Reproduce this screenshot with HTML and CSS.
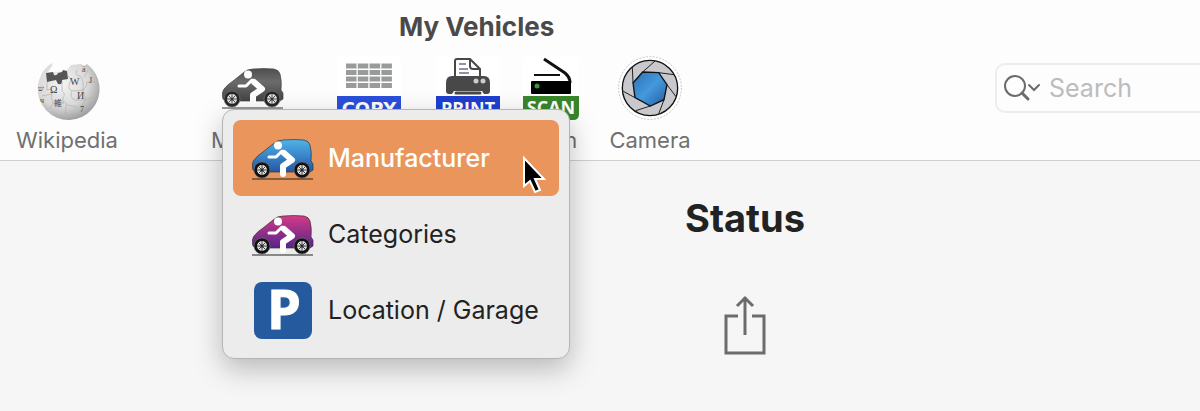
FILE: index.html
```
<!DOCTYPE html>
<html lang="en">
<head>
  <meta charset="UTF-8">
  <title>My Vehicles</title>
  <link rel="stylesheet" href="styles.css">
</head>
<body>

<!-- shared gradients and the car, the body takes its fill from <use> -->
<svg class="defs" width="0" height="0" aria-hidden="true">
  <defs>
    <linearGradient id="gray" x1="0" y1="0" x2="0" y2="1">
      <stop offset="0" stop-color="#3c3c3c"/>
      <stop offset="0.4" stop-color="#5c5c5c"/>
      <stop offset="1" stop-color="#303030"/>
    </linearGradient>
    <linearGradient id="blue" x1="0" y1="0" x2="0" y2="1">
      <stop offset="0" stop-color="#4fb4ea"/>
      <stop offset="1" stop-color="#2456a6"/>
    </linearGradient>
    <linearGradient id="purple" x1="0" y1="0" x2="0" y2="1">
      <stop offset="0" stop-color="#d63a86"/>
      <stop offset="1" stop-color="#55248c"/>
    </linearGradient>
    <linearGradient id="lens" x1="0" y1="0" x2="1" y2="1">
      <stop offset="0" stop-color="#2f6fb6"/>
      <stop offset="0.5" stop-color="#4499dc"/>
      <stop offset="1" stop-color="#2459a0"/>
    </linearGradient>
    <radialGradient id="globe" cx="0.4" cy="0.35" r="0.7">
      <stop offset="0" stop-color="#f4f4f4"/>
      <stop offset="0.6" stop-color="#d8d8d8"/>
      <stop offset="1" stop-color="#969696"/>
    </radialGradient>
    <g id="wheel">
      <circle r="8" fill="#111" stroke="#777" stroke-width="0.6"/>
      <circle r="5" fill="#ddd"/>
      <path d="M0-5V5M-5 0H5M-3.5-3.5L3.5 3.5M-3.5 3.5L3.5-3.5" stroke="#444" stroke-width="1"/>
      <circle r="1.5" fill="#222"/>
    </g>
    <symbol id="car" viewBox="0 0 62 42">
      <path d="M1 31C0 28 0 24 2 21Q6 16 11 13L21 5Q25 1 31 1Q42 0 52 1Q57 2 58 6Q60 13 59 22L61 25V31L58 33H3Z" stroke="#333" stroke-width="0.7"/>
      <use href="#wheel" x="10" y="31"/>
      <use href="#wheel" x="50" y="31"/>
      <path d="M0 40H61" stroke="#222" stroke-width="1"/>
      <g class="rider">
        <circle cx="26" cy="6.5" r="4"/>
        <path class="arm" d="M17 18H24L30 12"/>
        <path class="body" d="M32 14L40 21L31 27V35"/>
      </g>
    </symbol>
  </defs>
</svg>

<header>
  <h1>My Vehicles</h1>
  <div class="toolbar">
    <button class="tool wiki">
      <svg width="64" height="64" viewBox="0 0 64 64">
        <path d="M14 9L18 7L16 12L12 17L31 15L36 9L46 8L49 10L52 8A31 31 0 1 1 14 9Z" fill="url(#globe)"/>
        <path d="M11 17L18 16L19 19Q22 20 23 17L27 16L28 14L32 15L33 23L27 24Q28 29 23 28L21 24L12 26Z" fill="#565656"/>
        <g fill="none" stroke="#b0b0b0" stroke-width="0.7">
          <path d="M12 26V34Q17 32 17 37Q15 41 18 47L26 48Q30 44 32 49L42 51"/>
          <path d="M27 25V35Q31 38 28 42V48M33 20Q37 22 35 27Q31 34 39 35L48 34Q53 30 52 26L60 26"/>
          <path d="M42 14Q39 20 45 20Q49 24 48 34L51 44Q46 47 46 57M7 40L17 38M31 49L30 61"/>
          <path d="M37 35Q34 42 40 44L51 44L57 41M18 47L15 53M53 14L49 21"/>
        </g>
        <g class="glyphs">
          <text x="15" y="37">Ω</text>
          <text x="35" y="29">W</text>
          <text x="42" y="43">И</text>
          <text x="45" y="56" class="small">7</text>
          <text x="19" y="50" class="small">維</text>
          <text x="3" y="35" class="small">ש</text>
          <text x="47" y="16" class="small">ä</text>
          <text x="54" y="27" class="small">J</text>
          <text x="5" y="47" class="small">ч</text>
        </g>
      </svg>
      <span>Wikipedia</span>
    </button>

    <div class="dropdown">
      <button class="tool" aria-haspopup="menu" aria-expanded="true">
        <svg class="dim" width="62" height="64" viewBox="0 -12 62 64"><use href="#car" width="62" height="42" fill="url(#gray)"/></svg>
        <span>Manage</span>
      </button>
      <div class="menu" role="menu">
        <button class="menu-item active" role="menuitem">
          <svg width="62" height="46" viewBox="0 -4 62 46"><use href="#car" width="62" height="42" fill="url(#blue)"/></svg>
          Manufacturer
          <svg class="cursor" width="24" height="38" viewBox="0 0 24 38">
            <path d="M2 2V30L8 25L13 36L18 34L13 23H22Z" fill="#000" stroke="#fff" stroke-width="2"/>
          </svg>
        </button>
        <button class="menu-item" role="menuitem">
          <svg width="62" height="46" viewBox="0 -4 62 46"><use href="#car" width="62" height="42" fill="url(#purple)"/></svg>
          Categories
        </button>
        <button class="menu-item" role="menuitem">
          <svg width="62" height="58" viewBox="0 0 62 58">
            <rect x="2" y="1" width="58" height="57" rx="8" fill="#255a9f"/>
            <text class="parking" x="32" y="48">P</text>
          </svg>
          Location / Garage
        </button>
      </div>
    </div>

    <button class="tool copy" aria-label="Copy">
      <svg width="64" height="64" viewBox="0 0 64 64">
        <rect width="64" height="64" rx="5" fill="#fff"/>
        <path d="M9 10H55M9 16.500H55M9 23H55M9 29.500H55" stroke="#999b9b" stroke-width="5" stroke-dasharray="10.500 1.300"/>
        <path d="M0 40H64V60Q64 64 60 64H4Q0 64 0 60Z" fill="#2b4fdb"/>
        <text class="badge wide" x="32" y="59">COPY</text>
      </svg>
    </button>

    <button class="tool print" aria-label="Print">
      <svg width="64" height="64" viewBox="0 0 64 64">
        <rect width="64" height="64" rx="5" fill="#fff"/>
        <path d="M10 35V27Q10 20 16 20H48Q54 20 54 27V35Q54 38 51 38H48L46 35H18L16 38H13Q10 38 10 35Z" fill="#484848"/>
        <path d="M19 21V5Q19 3 21 3H34L44 13V21Z" fill="#fff" stroke="#484848" stroke-width="2"/>
        <path d="M34 3V10Q34 13 37 13H44" fill="none" stroke="#484848" stroke-width="2"/>
        <path d="M23 8H30M23 13H32M23 17H33" stroke="#9690a4" stroke-width="2"/>
        <rect x="18" y="20" width="28" height="3" fill="#484848"/>
        <circle cx="40" cy="25" r="2.500" fill="#ccc"/>
        <circle cx="47" cy="25" r="2.500" fill="#ccc"/>
        <path d="M20 37H44" stroke="#484848" stroke-width="3" stroke-linecap="round"/>
        <path d="M0 40H64V60Q64 64 60 64H4Q0 64 0 60Z" fill="#1f3fcf"/>
        <text class="badge" x="32" y="59">PRINT</text>
      </svg>
    </button>

    <button class="tool scan">
      <svg width="56" height="64" viewBox="0 0 56 64">
        <rect width="56" height="64" rx="5" fill="#fff"/>
        <path d="M21 3L42 17Q47 21 47 27" fill="none" stroke="#111" stroke-width="3"/>
        <path d="M11 19H37" stroke="#111" stroke-width="2"/>
        <rect x="8" y="25" width="40" height="13" rx="1" fill="#000"/>
        <circle cx="14" cy="30" r="2.500" fill="#3f9442"/>
        <path d="M0 40H56V58Q56 64 50 64H6Q0 64 0 58Z" fill="#3a852b"/>
        <text class="badge" x="28" y="58">SCAN</text>
      </svg>
      <span>Scan</span>
    </button>

    <button class="tool camera">
      <svg width="64" height="64" viewBox="54 32 192 192">
        <circle cx="150" cy="128" r="94" fill="#fff" stroke="#aaa" stroke-width="2" stroke-dasharray="6 4"/>
        <circle cx="150" cy="128" r="83" fill="#c9c9cd" stroke="#111" stroke-width="4"/>
        <path d="M128 80L165 47M176 82L222 88M201 118L228 154M192 163L176 206M151 182L107 196M105 157L70 138M99 113L97 66" stroke="#222" stroke-width="3"/>
        <path d="M128 80L176 82L201 118L192 163L151 182L105 157L99 113Z" fill="url(#lens)" stroke="#111" stroke-width="4"/>
      </svg>
      <span>Camera</span>
    </button>

    <label class="search">
      <svg width="36" height="28" viewBox="0 0 36 28" fill="none" stroke="#6b6b6b" stroke-width="2" stroke-linecap="round">
        <circle cx="11" cy="12" r="10"/>
        <path d="M18 19L24 25" stroke-width="3"/>
        <path d="M25 11L30 16L35 11"/>
      </svg>
      <input type="search" placeholder="Search" aria-label="Search">
    </label>
  </div>
</header>

<main>
  <h2>Status</h2>
  <button class="share" aria-label="Share">
    <svg width="42" height="60" viewBox="0 0 42 60" fill="none" stroke="#6c6c6c" stroke-width="3">
      <path d="M14 21H2V58H40V21H28"/>
      <path d="M21 2V40M13 11L21 3L29 11"/>
    </svg>
  </button>
</main>

</body>
</html>
```

FILE: styles.css
```
* {
  box-sizing: border-box;
}

body {
  margin: 0;
  min-height: 100vh;
  background: #f6f6f6;
  color: #222;
  font-family: Inter, "Liberation Sans", sans-serif;
  overflow-x: hidden;
}

button {
  padding: 0;
  border: none;
  background: none;
  color: inherit;
  font: inherit;
}

svg {
  display: block;
  flex: none;
  overflow: visible;
}

.defs {
  position: absolute;
}

header {
  background: #fdfdfd;
  border-bottom: 1px solid #cfcfcf;
}

h1 {
  margin: 0;
  padding: 11px 0 13px 399px;
  font-size: 26px;
  line-height: 32px;
  font-weight: 700;
  color: #4a4a4a;
}

.toolbar {
  display: flex;
  align-items: flex-start;
  padding-left: 16px;
  height: 104px;
}

.tool {
  display: flex;
  flex-direction: column;
  align-items: center;
  gap: 8px;
  flex: none;
  font-size: 22px;
  line-height: 24px;
  color: #707070;
}

.wiki {
  width: 102px;
}

.dropdown {
  position: relative;
  width: 82px;
  margin-left: 94px;
}

.dropdown .tool {
  width: 82px;
}

.copy {
  width: 64px;
  margin-left: 43px;
}

.print {
  width: 64px;
  margin-left: 35px;
}

.scan {
  width: 56px;
  margin-left: 23px;
}

.camera {
  width: 80px;
  margin-left: 31px;
}

/* person on top of the car icon */
.rider {
  fill: currentColor;
  color: #fff;
}

.rider path {
  fill: none;
  stroke: currentColor;
  stroke-linecap: round;
  stroke-linejoin: round;
}

.rider .arm {
  stroke-width: 3px;
}

.rider .body {
  stroke-width: 6px;
}

.dim {
  opacity: 0.9;
}

.glyphs {
  font-family: "Liberation Serif", "DejaVu Sans", "Noto Sans CJK JP", serif;
  font-size: 10px;
  fill: #444;
}

.glyphs .small {
  font-size: 8px;
}

.badge {
  font-family: "Open Sans", sans-serif;
  font-size: 18px;
  font-weight: 700;
  fill: #fff;
  text-anchor: middle;
}

.badge.wide {
  font-family: "DejaVu Sans", sans-serif;
}

/* dropdown menu */
.menu {
  position: absolute;
  top: 53px;
  left: 10px;
  width: 348px;
  padding: 10px;
  border: 1px solid #b4b4b4;
  border-radius: 12px;
  background: #ececec;
  box-shadow: 0 10px 28px rgba(0, 0, 0, 0.25);
  z-index: 10;
}

.menu-item {
  position: relative;
  display: flex;
  align-items: center;
  gap: 14px;
  width: 100%;
  height: 76px;
  padding-left: 19px;
  border-radius: 8px;
  font-size: 25px;
  white-space: nowrap;
}

.menu-item.active {
  background: #ea955c;
  color: #fff;
  font-weight: 500;
}

.cursor {
  position: absolute;
  top: 36px;
  right: 13px;
}

.parking {
  font-family: "Open Sans", sans-serif;
  font-size: 54px;
  font-weight: 700;
  fill: #fff;
  stroke: #fff;
  text-anchor: middle;
}

.search {
  display: flex;
  align-items: center;
  gap: 9px;
  width: 205px;
  height: 50px;
  margin: 7px 0 0 auto;
  padding-left: 7px;
  border: 2px solid #ededed;
  border-right: none;
  border-radius: 10px 0 0 10px;
}

.search input {
  flex: 1;
  min-width: 0;
  padding: 0;
  border: none;
  outline: none;
  background: none;
  font: inherit;
  font-size: 25px;
}

.search input::placeholder {
  color: #bcbcbc;
}

main {
  display: flex;
  flex-direction: column;
  align-items: center;
  padding: 33px 0 56px 290px;
}

h2 {
  margin: 0 0 53px;
  font-size: 38px;
  line-height: 48px;
  font-weight: 700;
}
```
